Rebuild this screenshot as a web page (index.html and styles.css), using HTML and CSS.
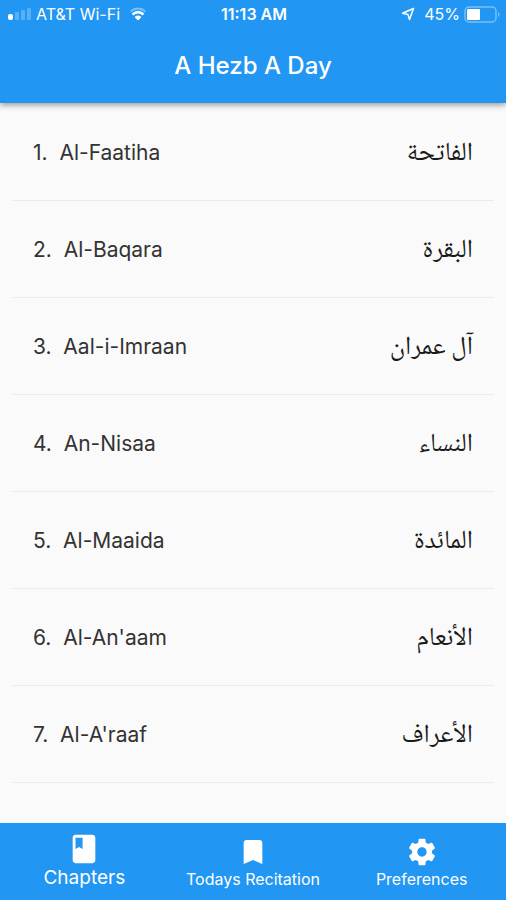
FILE: index.html
```html
<!DOCTYPE html>
<html lang="en">
<head>
    <meta charset="UTF-8">
    <meta name="viewport" content="width=device-width, initial-scale=1.0">
    <title>A Hezb A Day</title>
    <link rel="stylesheet" href="styles.css">
</head>
<body>
    <header class="app-bar">
        <div class="status-bar">
            <div class="status-left">
                <svg class="signal" width="24" height="14" viewBox="0 0 24 14" fill="#fff" aria-hidden="true">
                    <rect x="0" y="7" width="5" height="6" rx="2"/>
                    <rect x="7" y="5" width="4" height="8" rx="1" opacity="0.25"/>
                    <rect x="13" y="3" width="4" height="10" rx="1" opacity="0.25"/>
                    <rect x="19" y="1" width="4" height="12" rx="1" opacity="0.25"/>
                </svg>
                <span>AT&amp;T Wi-Fi</span>
                <svg class="wifi" width="18" height="14" viewBox="0 0 18 14" fill="none" stroke="#fff" aria-hidden="true">
                    <path d="M1.5 4.500C6 0.500 12 0.500 16.5 4.500" stroke-width="2" opacity="0.4"/>
                    <path d="M3.500 7.500C7 4.500 11 4.500 14.500 7.500" stroke-width="2.600"/>
                    <path d="M9 13L6 10.200C7.800 8.600 10.200 8.600 12 10.200Z" fill="#fff"/>
                </svg>
            </div>
            <span class="status-time">11:13 AM</span>
            <div class="status-right">
                <svg class="location" width="14" height="14" viewBox="0 0 14 14" fill="none" stroke="#fff" stroke-width="1.5" stroke-linejoin="round" aria-hidden="true">
                    <path d="M12.500 1.500L1.500 6.300L7 7.500L8.500 12.500Z"/>
                </svg>
                <span>45%</span>
                <svg class="battery" width="36" height="17" viewBox="0 0 36 17" aria-hidden="true">
                    <rect x="1" y="1" width="31" height="15" rx="4" fill="none" stroke="#fff" stroke-width="1.5" opacity="0.4"/>
                    <rect x="3" y="3" width="13" height="11" rx="1" fill="#fff"/>
                    <path d="M34 6C36 7 36 10 34 11Z" fill="#fff" opacity="0.4"/>
                </svg>
            </div>
        </div>
        <h1>A Hezb A Day</h1>
    </header>

    <main>
        <ol class="chapters">
            <li><span class="name">1.&nbsp; Al-Faatiha</span><span class="arabic" lang="ar" dir="rtl">الفاتحة</span></li>
            <li><span class="name">2.&nbsp; Al-Baqara</span><span class="arabic" lang="ar" dir="rtl">البقرة</span></li>
            <li><span class="name">3.&nbsp; Aal-i-Imraan</span><span class="arabic" lang="ar" dir="rtl">آل عمران</span></li>
            <li><span class="name">4.&nbsp; An-Nisaa</span><span class="arabic" lang="ar" dir="rtl">النساء</span></li>
            <li><span class="name">5.&nbsp; Al-Maaida</span><span class="arabic" lang="ar" dir="rtl">المائدة</span></li>
            <li><span class="name">6.&nbsp; Al-An'aam</span><span class="arabic" lang="ar" dir="rtl">الأنعام</span></li>
            <li><span class="name">7.&nbsp; Al-A'raaf</span><span class="arabic" lang="ar" dir="rtl">الأعراف</span></li>
        </ol>
    </main>

    <nav class="bottom-nav">
        <button type="button" class="nav-item active">
            <svg width="34" height="34" viewBox="0 0 24 24" fill="#fff" aria-hidden="true">
                <path d="M18 2H6c-1.100 0-2 .9-2 2v16c0 1.100.9 2 2 2h12c1.100 0 2-.9 2-2V4c0-1.100-.9-2-2-2zM6 4h5v8l-2.500-1.500L6 12V4z"/>
            </svg>
            <span>Chapters</span>
        </button>
        <button type="button" class="nav-item">
            <svg width="32" height="32" viewBox="0 0 24 24" fill="#fff" aria-hidden="true">
                <path d="M17 3H7c-1.100 0-2 .9-2 2v16l7-3 7 3V5c0-1.100-.9-2-2-2z"/>
            </svg>
            <span>Todays Recitation</span>
        </button>
        <button type="button" class="nav-item">
            <svg width="32" height="32" viewBox="0 0 24 24" fill="#fff" aria-hidden="true">
                <path d="M19.430 12.980c.04-.32.07-.64.07-.98s-.03-.66-.07-.98l2.110-1.650c.19-.15.24-.42.12-.64l-2-3.460c-.12-.22-.39-.3-.61-.22l-2.490 1c-.52-.4-1.080-.73-1.690-.98l-.38-2.650C14.460 2.180 14.250 2 14 2h-4c-.25 0-.46.18-.49.42l-.38 2.650c-.61.25-1.170.59-1.690.98l-2.490-1c-.23-.09-.49 0-.61.22l-2 3.460c-.13.22-.07.49.12.64l2.110 1.650c-.04.32-.07.65-.07.98s.03.66.07.98l-2.110 1.650c-.19.15-.24.42-.12.64l2 3.460c.12.22.39.3.61.22l2.490-1c.52.4 1.080.73 1.690.98l.38 2.650c.03.24.24.42.49.42h4c.25 0 .46-.18.49-.42l.38-2.650c.61-.25 1.170-.59 1.690-.98l2.490 1c.23.09.49 0 .61-.22l2-3.460c.12-.22.07-.49-.12-.64l-2.110-1.650zM12 15.500c-1.930 0-3.500-1.570-3.500-3.500s1.570-3.500 3.500-3.500 3.500 1.570 3.500 3.500-1.570 3.500-3.500 3.500z"/>
            </svg>
            <span>Preferences</span>
        </button>
    </nav>
</body>
</html>
```
FILE: styles.css
```css
* {
    box-sizing: border-box;
}

body {
    font-family: Inter, "Liberation Sans", sans-serif;
    background-color: #fafafa;
    color: #333;
    display: flex;
    flex-direction: column;
    min-height: 100vh;
    margin: 0;
}

.app-bar {
    background-color: #2196f3; /* Material blue */
    color: #fff;
    box-shadow: 0 2px 6px rgba(0, 0, 0, 0.4);
    padding-bottom: 20px;
}

.status-bar {
    display: grid;
    grid-template-columns: 1fr auto 1fr;
    align-items: center;
    height: 28px;
    padding: 0 6px 0 8px;
    font-size: 16px;
}

.status-left,
.status-right {
    display: flex;
    align-items: center;
    gap: 4px;
}

.status-right {
    justify-content: flex-end;
}

.wifi,
.location {
    margin: 0 5px;
}

.status-time {
    font-weight: 600;
}

h1 {
    margin: 0;
    padding-top: 20px;
    font-size: 24px;
    font-weight: 500;
    line-height: 35px;
    text-align: center;
}

main {
    flex: 1;
}

.chapters {
    list-style: none;
    margin: 0;
    padding: 1px 12px 0;
}

.chapters li {
    display: flex;
    justify-content: space-between;
    align-items: center;
    height: 97px;
    padding: 0 21px;
    border-bottom: 1px solid #ebebeb;
}

.name {
    font-size: 21px;
}

.arabic {
    padding-top: 3px;
    color: #1a1a1a;
    font-family: "Noto Naskh Arabic", "DejaVu Sans", sans-serif;
    font-size: 26px;
}

.bottom-nav {
    display: grid;
    grid-template-columns: repeat(3, 1fr);
    height: 77px;
    background-color: #2196f3;
}

.nav-item {
    display: flex;
    flex-direction: column;
    align-items: center;
    justify-content: flex-end;
    padding: 0 0 10px;
    border: none;
    background: none;
    color: #fff;
    font-family: inherit;
    font-size: 16px;
    line-height: 22px;
    white-space: nowrap;
    cursor: pointer;
}

.nav-item.active {
    font-size: 19px;
    line-height: 24px;
}
```
